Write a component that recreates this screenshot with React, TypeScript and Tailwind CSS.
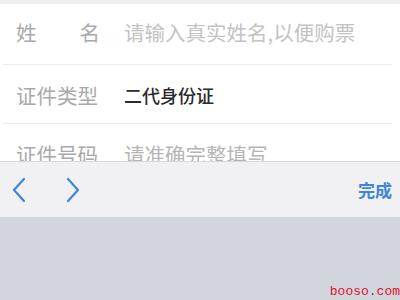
import React from "react";

const cjk = "font-['PingFang_SC','Noto_Sans_CJK_SC',sans-serif]";

function Row({ label, children, className }: { label: React.ReactNode; children: React.ReactNode; className: string }) {
  return (
    <div className={`ml-[3px] mr-[8px] flex shrink-0 items-center pl-[13px] ${className}`}>
      <div className="w-[108px] shrink-0 text-[20.5px] leading-none text-[#a9a9a9]">{label}</div>
      <div className="leading-none">{children}</div>
    </div>
  );
}

export default function App() {
  return (
    <div className={`relative flex h-[300px] w-[400px] flex-col overflow-hidden bg-white ${cjk}`}>
      <div className="h-[4px] shrink-0 bg-[#efefef]" />
      <div className="flex h-[157px] shrink-0 flex-col overflow-hidden">
        <Row
          className="h-[61px] border-b border-[#ebebeb] pb-[4px]"
          label={<span className="flex w-[84px] justify-between"><span>姓</span><span>名</span></span>}
        >
          <span className="text-[20.5px] text-[#c3c3c3]">请输入真实姓名,以便购票</span>
        </Row>
        <Row className="h-[59px] border-b border-[#ebebeb] pt-[2px]" label="证件类型">
          <span className="text-[18px] font-medium text-[#2b2b2b]">二代身份证</span>
        </Row>
        <Row className="h-[60px]" label="证件号码">
          <span className="text-[20.5px] text-[#b5b5b5]">请准确完整填写</span>
        </Row>
      </div>
      <div className="flex h-[56px] shrink-0 items-center border-t border-[#d8d8da] bg-[#f1f1f3]">
        <svg width="16" height="26" viewBox="0 0 16 26" className="ml-[11px]">
          <path d="M13 2 L3 13 L13 24" fill="none" stroke="#3d86d9" strokeWidth="2.2" strokeLinecap="round" strokeLinejoin="round" />
        </svg>
        <svg width="16" height="26" viewBox="0 0 16 26" className="ml-[38px]">
          <path d="M3 2 L13 13 L3 24" fill="none" stroke="#3d86d9" strokeWidth="2.2" strokeLinecap="round" strokeLinejoin="round" />
        </svg>
        <div className="ml-auto mr-[8px] text-[17px] font-semibold text-[#3d86d9]">完成</div>
      </div>
      <div className="flex-1 bg-[#d2d5db]" />
      <div className="absolute bottom-[2px] right-0 font-['Liberation_Mono',monospace] text-[13px] leading-none text-[#e0102a]">
        booso.com
      </div>
    </div>
  );
}
